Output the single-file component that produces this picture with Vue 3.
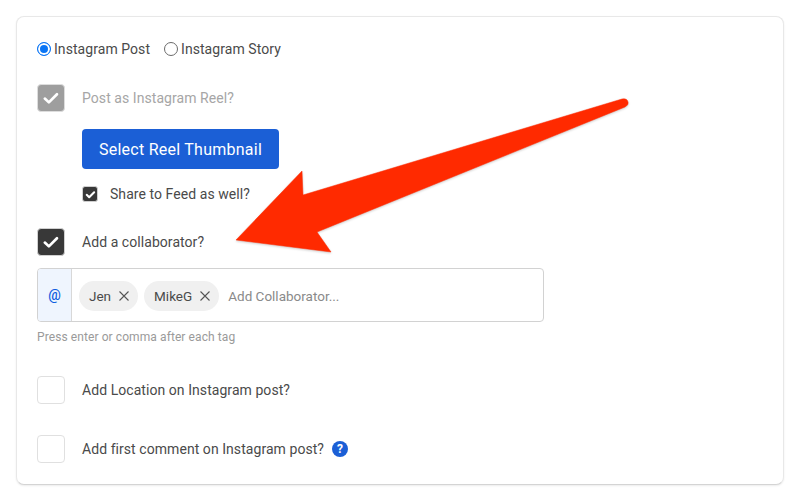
<script setup>
const collaborators = ['Jen', 'MikeG']
</script>

<template>
  <div class="page">
    <div class="card">
      <div class="radios">
        <label class="radio-item">
          <span class="radio radio-on"></span>
          Instagram Post
        </label>
        <label class="radio-item">
          <span class="radio"></span>
          Instagram Story
        </label>
      </div>

      <div class="check-row reel-row">
        <span class="box box-disabled">
          <svg width="18" height="18" viewBox="0 0 16 16"><path d="M2.5 8.5l3.6 3.4 7.2-7.2" class="tick" /></svg>
        </span>
        <span class="muted">Post as Instagram Reel?</span>
      </div>

      <div class="reel-options">
        <button class="thumb-btn">Select Reel Thumbnail</button>
        <div class="share-row">
          <span class="box-small">
            <svg width="11" height="11" viewBox="0 0 16 16"><path d="M2.5 8.5l3.6 3.4 7.2-7.2" class="tick tick-bold" /></svg>
          </span>
          <span>Share to Feed as well?</span>
        </div>
      </div>

      <div class="check-row collab-row">
        <span class="box box-checked">
          <svg width="18" height="18" viewBox="0 0 16 16"><path d="M2.5 8.5l3.6 3.4 7.2-7.2" class="tick" /></svg>
        </span>
        <span>Add a collaborator?</span>
      </div>

      <div class="tag-input">
        <span class="addon">@</span>
        <div class="tags">
          <span v-for="name in collaborators" :key="name" class="chip">
            {{ name }}
            <svg width="10" height="10" viewBox="0 0 10 10"><path d="M0.5 0.5l9 9M9.5 0.5l-9 9" class="chip-x" /></svg>
          </span>
          <span class="placeholder">Add Collaborator...</span>
        </div>
      </div>
      <div class="help">Press enter or comma after each tag</div>

      <div class="check-row location-row">
        <span class="box"></span>
        <span>Add Location on Instagram post?</span>
      </div>

      <div class="check-row comment-row">
        <span class="box"></span>
        <span>Add first comment on Instagram post?</span>
        <span class="help-dot">?</span>
      </div>

      <svg class="arrow" width="800" height="502" viewBox="0 0 800 502">
        <path
          d="M236 240L302 171L303 195L622 99Q627 98 628 102Q629 105 625 107L317 232L331 252Z"
          fill="#ff2a00"
          stroke="#ff2a00"
          stroke-width="0.5"
          stroke-linejoin="round"
        />
      </svg>
    </div>
  </div>
</template>

<style>
body {
  margin: 0;
  background: #fff;
}
</style>

<style scoped>
.page {
  width: 800px;
  height: 502px;
  padding: 16px;
  box-sizing: border-box;
  font-family: Roboto, "Liberation Sans", sans-serif;
  font-size: 14px;
  letter-spacing: 0.06px;
  color: #4a4a4a;
  overflow: hidden;
}

.card {
  height: 469px;
  box-sizing: border-box;
  padding: 21px 20px 0;
  background: #fff;
  border: 1px solid #e8e8e8;
  border-bottom-color: #d4d4d4;
  border-radius: 8px;
  box-shadow: 0 1px 2px rgba(0, 0, 0, 0.08);
}

.radios {
  display: flex;
  gap: 14px;
  height: 22px;
  align-items: center;
}

.radio-item {
  display: flex;
  align-items: center;
  gap: 3px;
}

.radio {
  width: 12px;
  height: 12px;
  border: 1px solid #6b6b6b;
  border-radius: 50%;
  background: #fff;
  box-sizing: content-box;
}

.radio-on {
  border-color: #0a75f5;
  background: #0a75f5;
  box-shadow: inset 0 0 0 2px #fff;
}

.check-row {
  display: flex;
  align-items: center;
  height: 28px;
}

.check-row .box {
  margin-right: 17px;
}

.box {
  width: 28px;
  height: 28px;
  box-sizing: border-box;
  display: flex;
  align-items: center;
  justify-content: center;
  flex: none;
  border: 1px solid #e0e0e0;
  border-radius: 4px;
  background: #fff;
}

.box-disabled {
  background: #9e9e9e;
  border-color: #ddd;
}

.box-checked {
  background: #383838;
  border-color: #d0d0d0;
}

.tick {
  fill: none;
  stroke: #fff;
  stroke-width: 2.4;
  stroke-linecap: round;
  stroke-linejoin: round;
}

.tick-bold {
  stroke-width: 3;
}

.reel-row {
  margin-top: 24px;
}

.muted {
  color: #a6a6a6;
}

.reel-options {
  margin-left: 45px;
}

.thumb-btn {
  display: block;
  width: 197px;
  height: 40px;
  margin-top: 17px;
  padding: 0;
  border: none;
  border-radius: 4px;
  background: #1b5fd6;
  color: #fff;
  font-family: inherit;
  font-size: 16px;
  letter-spacing: 0.25px;
}

.share-row {
  display: flex;
  align-items: center;
  gap: 12px;
  height: 18px;
  margin-top: 16px;
}

.box-small {
  width: 16px;
  height: 16px;
  box-sizing: border-box;
  display: flex;
  align-items: center;
  justify-content: center;
  border: 1px solid #cfcfcf;
  border-radius: 3px;
  background: #383838;
}

.collab-row {
  margin-top: 25px;
}

.tag-input {
  display: flex;
  width: 507px;
  height: 54px;
  margin-top: 12px;
  box-sizing: border-box;
  border: 1px solid #d2d2d2;
  border-radius: 4px;
  overflow: hidden;
}

.addon {
  width: 34px;
  flex: none;
  display: flex;
  align-items: center;
  justify-content: center;
  background: #eff5fe;
  border-right: 1px solid #d8d8d8;
  box-sizing: border-box;
  color: #0f5ee0;
  font-size: 14px;
  font-weight: 500;
}

.tags {
  display: flex;
  align-items: center;
  gap: 6px;
  padding: 1px 0 0 7px;
}

.chip {
  display: flex;
  align-items: center;
  gap: 8px;
  height: 30px;
  padding: 0 9px 0 10px;
  border-radius: 15px;
  background: #f0f0f0;
  font-size: 13.5px;
  letter-spacing: 0;
}

.chip-x {
  fill: none;
  stroke: #555;
  stroke-width: 1.1;
}

.placeholder {
  margin-left: 3px;
  font-size: 13.5px;
  letter-spacing: 0;
  color: #8a8a8a;
}

.help {
  margin-top: 8px;
  font-size: 12px;
  line-height: 14px;
  letter-spacing: 0.09px;
  color: #9a9a9a;
}

.location-row {
  margin-top: 32px;
}

.comment-row {
  margin-top: 31px;
}

.help-dot {
  width: 16px;
  height: 16px;
  margin-left: 8px;
  display: flex;
  align-items: center;
  justify-content: center;
  border-radius: 50%;
  background: #1b5fd6;
  color: #fff;
  font-size: 12px;
  font-weight: 700;
}

.arrow {
  position: absolute;
  top: 0;
  left: 0;
  pointer-events: none;
  filter: drop-shadow(0 1px 1px rgba(0, 0, 0, 0.2));
}
</style>
